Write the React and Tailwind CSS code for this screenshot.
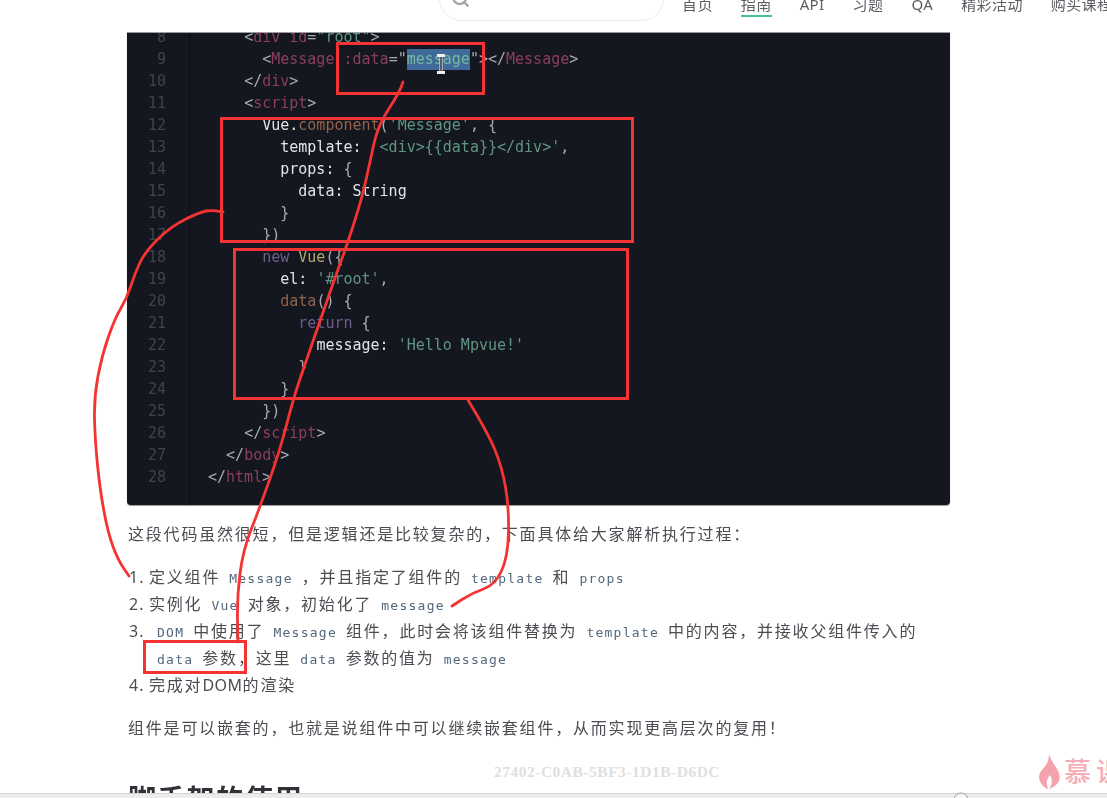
import React from "react";
import { Search } from "lucide-react";

const T = "text-[#8b3f5c]"; // tag
const P = "text-[#a9abaf]"; // punctuation
const S = "text-[#5f9580]"; // string
const K = "text-[#e2e3e4]"; // key
const O = "text-[#94634a]"; // method
const Y = "text-[#b3a56c]"; // class
const N = "text-[#6f5d8c]"; // keyword

const codeLines = [
  [8, "      ", [["<", P], ["div", T], [" ", P], ["id", T], ["=", P], ['"root"', S], [">", P]]],
  [9, "        ", [["<", P], ["Message", T], [" :data", T], ["=", P], ['"', P], ["message", "text-[#74b8a0]"], ['"', P], [">", P], ["</", P], ["Message", T], [">", P]]],
  [10, "      ", [["</", P], ["div", T], [">", P]]],
  [11, "      ", [["<", P], ["script", T], [">", P]]],
  [12, "        ", [["Vue", K], [".", K], ["component", O], ["(", P], ["'Message'", S], [", {", P]]],
  [13, "          ", [["template:", K], ["  ", P], ["<div>{{data}}</div>'", S], [",", P]]],
  [14, "          ", [["props:", K], [" {", P]]],
  [15, "            ", [["data:", K], [" String", K]]],
  [16, "          ", [["}", P]]],
  [17, "        ", [["})", P]]],
  [18, "        ", [["new", N], [" ", P], ["Vue", Y], ["({", P]]],
  [19, "          ", [["el:", K], [" ", P], ["'#root'", S], [",", P]]],
  [20, "          ", [["data", O], ["() {", P]]],
  [21, "            ", [["return", N], [" {", P]]],
  [22, "              ", [["message:", K], [" ", P], ["'Hello Mpvue!'", S]]],
  [23, "            ", [["}", P]]],
  [24, "          ", [["}", P]]],
  [25, "        ", [["})", P]]],
  [26, "      ", [["</", P], ["script", T], [">", P]]],
  [27, "    ", [["</", P], ["body", T], [">", P]]],
  [28, "  ", [["</", P], ["html", T], [">", P]]],
];

const navItems = ["首页", "指南", "API", "习题", "QA", "精彩活动", "购买课程"];

// hand drawn pen strokes, taken point by point from the picture
const strokes = [
  [[223, 212], [212, 210], [200, 212], [170, 227], [145, 252], [135, 273], [127, 298], [115, 318], [102, 355], [94, 397], [95, 440], [100, 490], [108, 533], [118, 560], [129, 576]],
  [[403, 82], [400, 92], [378, 125], [370, 162], [362, 198], [347, 245], [337, 272], [303, 370], [293, 400], [280, 450], [260, 507], [243, 550], [237, 597], [238, 642]],
  [[468, 400], [488, 433], [502, 467], [509, 507], [508, 557], [495, 585], [472, 593], [452, 606]],
];

const smooth = (pts) => {
  let d = `M${pts[0][0]} ${pts[0][1]}`;
  for (let i = 1; i < pts.length - 1; i++) {
    const mx = (pts[i][0] + pts[i + 1][0]) / 2;
    const my = (pts[i][1] + pts[i + 1][1]) / 2;
    d += ` Q${pts[i][0]} ${pts[i][1]} ${mx} ${my}`;
  }
  const last = pts[pts.length - 1];
  return `${d} L${last[0]} ${last[1]}`;
};

const Code = ({ children }) => (
  <code className="mx-[9px] font-['DejaVu_Sans_Mono',monospace] text-[13px] leading-none tracking-[1.25px] text-[#53677d]">
    {children}
  </code>
);

const Box = ({ className }) => (
  <div className={`absolute border-[3px] border-[#f53333] ${className}`} />
);

export default function App() {
  return (
    <div className="relative flex h-[798px] w-[1107px] flex-col overflow-hidden bg-white font-['Noto_Sans','Noto_Sans_CJK_SC',sans-serif] text-[#4a4d52]">
      <div className="flex-1 overflow-hidden blur-[0.4px]">
        {/* top nav, scrolled mostly out of view */}
        <header className="flex h-[32px] items-start overflow-hidden pl-[439px]">
          <div className="-mt-[24px] flex h-[45px] w-[225px] shrink-0 items-center rounded-full border border-[#ececec] pl-[11px]">
            <Search size={19} strokeWidth={3} className="mt-[-1px] text-[#a8a8a8]" />
          </div>
          <nav className="-mt-[7px] ml-[18px] flex shrink-0 gap-[28px] whitespace-nowrap text-[15px] tracking-[0.4px] text-[#5b5e63]">
            {navItems.map((item) => (
              <span key={item} className={item === "指南" ? "border-b-2 border-[#45c19a] leading-[22px]" : "leading-[22px]"}>
                {item}
              </span>
            ))}
          </nav>
        </header>

        <main className="pl-[127px]">
          <div className="flex h-[473px] w-[823px] overflow-hidden rounded-b-[4px] border-t border-[#9a9ca0] bg-[#14171f] font-['DejaVu_Sans_Mono',monospace] text-[15px] leading-[22px] shadow-[0_1px_1px_#999]">
            <div className="w-[63px] shrink-0 border-r border-[#0c0e13] pr-[23px] text-right text-[#3f444b]">
              <div className="-mt-[7px]">
                {codeLines.map(([n]) => (
                  <div key={n} className="h-[22px]">{n}</div>
                ))}
              </div>
            </div>
            <div className="pl-[18px]">
              <div className="-mt-[7px] whitespace-pre">
                {codeLines.map(([n, indent, tokens]) => (
                  <div key={n} className="h-[22px]">
                    {indent.slice(2)}
                    {tokens.map(([text, color], i) => (
                      <span key={i} className={n === 9 && i === 5 ? `inline-block h-[21px] bg-[#3f6a99] leading-[21px] ${color}` : color}>
                        {text}
                      </span>
                    ))}
                  </div>
                ))}
              </div>
            </div>
          </div>

          <div className="w-[830px] pl-[1px] text-[16px] leading-[27px] tracking-[1.8px]">
            <p className="mt-[16px]">这段代码虽然很短，但是逻辑还是比较复杂的，下面具体给大家解析执行过程：</p>
            <ol className="mt-[16px] pl-[1px]">
              <li className="flex">
                <span className="w-[20px] shrink-0 tracking-[1px]">1.</span>
                <span>定义组件<Code>Message</Code>，并且指定了组件的<Code>template</Code>和<Code>props</Code></span>
              </li>
              <li className="flex">
                <span className="w-[20px] shrink-0 tracking-[1px]">2.</span>
                <span>实例化<Code>Vue</Code>对象，初始化了<Code>message</Code></span>
              </li>
              <li className="flex">
                <span className="w-[19px] shrink-0 tracking-[1px]">3.</span>
                <span>
                  <Code>DOM</Code>中使用了<Code>Message</Code>组件，此时会将该组件替换为<Code>template</Code>中的内容，并接收父组件传入的
                  <br />
                  <Code>data</Code>参数，这里<Code>data</Code>参数的值为<Code>message</Code>
                </span>
              </li>
              <li className="flex">
                <span className="w-[20px] shrink-0 tracking-[1px]">4.</span>
                <span>完成对<span className="tracking-[0.5px]">DOM</span>的渲染</span>
              </li>
            </ol>
            <p className="mt-[16px]">组件是可以嵌套的，也就是说组件中可以继续嵌套组件，从而实现更高层次的复用！</p>
          </div>
          <h2 className="mt-[37px] pl-[1px] text-[28px] font-bold leading-[40px] tracking-[1.2px] text-[#2f3237]">脚手架的使用</h2>
        </main>
      </div>

      {/* window scrollbar edge */}
      <div className="h-[5px] shrink-0 border-t border-[#d5d5d5] bg-[#ececec]" />

      {/* pen annotations drawn over the page */}
      <Box className="left-[336px] top-[42px] h-[53px] w-[149px]" />
      <Box className="left-[220px] top-[117px] h-[126px] w-[414px]" />
      <Box className="left-[233px] top-[248px] h-[152px] w-[396px]" />
      <Box className="left-[143px] top-[640px] h-[34px] w-[104px]" />
      <svg className="absolute left-0 top-0" width="1107" height="798" fill="none" stroke="#f53333" strokeWidth="2.8" strokeLinecap="round" strokeLinejoin="round">
        {strokes.map((pts, i) => (
          <path key={i} d={smooth(pts)} />
        ))}
      </svg>

      {/* text cursor over the selection */}
      <svg className="absolute left-[435px] top-[54px]" width="12" height="20" fill="none">
        <path d="M2 1.5 H5 L6 2.5 L7 1.5 H10 M6 2.5 V17.5 M2 18.5 H5 L6 17.5 L7 18.5 H10" stroke="#eceef0" strokeWidth="3" />
        <path d="M6 3 V17" stroke="#1b1e24" strokeWidth="1.4" />
      </svg>

      {/* watermark */}
      <div className="absolute left-[494px] top-[762px] whitespace-nowrap font-['Liberation_Serif',serif] text-[15.5px] font-bold leading-[20px] tracking-[0.5px] text-[#e0e0e0]">
        27402-C0AB-5BF3-1D1B-D6DC
      </div>
      <div className="absolute left-[1039px] top-[753px] flex items-center gap-[4px] whitespace-nowrap">
        <svg width="21" height="35" viewBox="0 0 21 35" className="shrink-0">
          <path d="M10 0 C12 6 15 10 18 15 C21 20 22 26 18 30 C15 33 12 34 10 35 C13 31 14 26 11 21 C9 24 7 27 8 30 C8 32 9 34 9 35 C4 33 1 29 0 24 C0 18 4 15 7 11 C9 8 10 4 10 0 Z" fill="#f4a3ac" />
        </svg>
        <span className="font-['Noto_Sans_CJK_SC',sans-serif] text-[27px] font-medium leading-[36px] tracking-[5px] text-[#f5aeb6]">慕课</span>
      </div>
      <svg className="absolute left-[952px] top-[791px]" width="18" height="7" fill="#f5f5f5" stroke="#9a9a9a">
        <circle cx="9" cy="9" r="7" />
      </svg>
    </div>
  );
}
